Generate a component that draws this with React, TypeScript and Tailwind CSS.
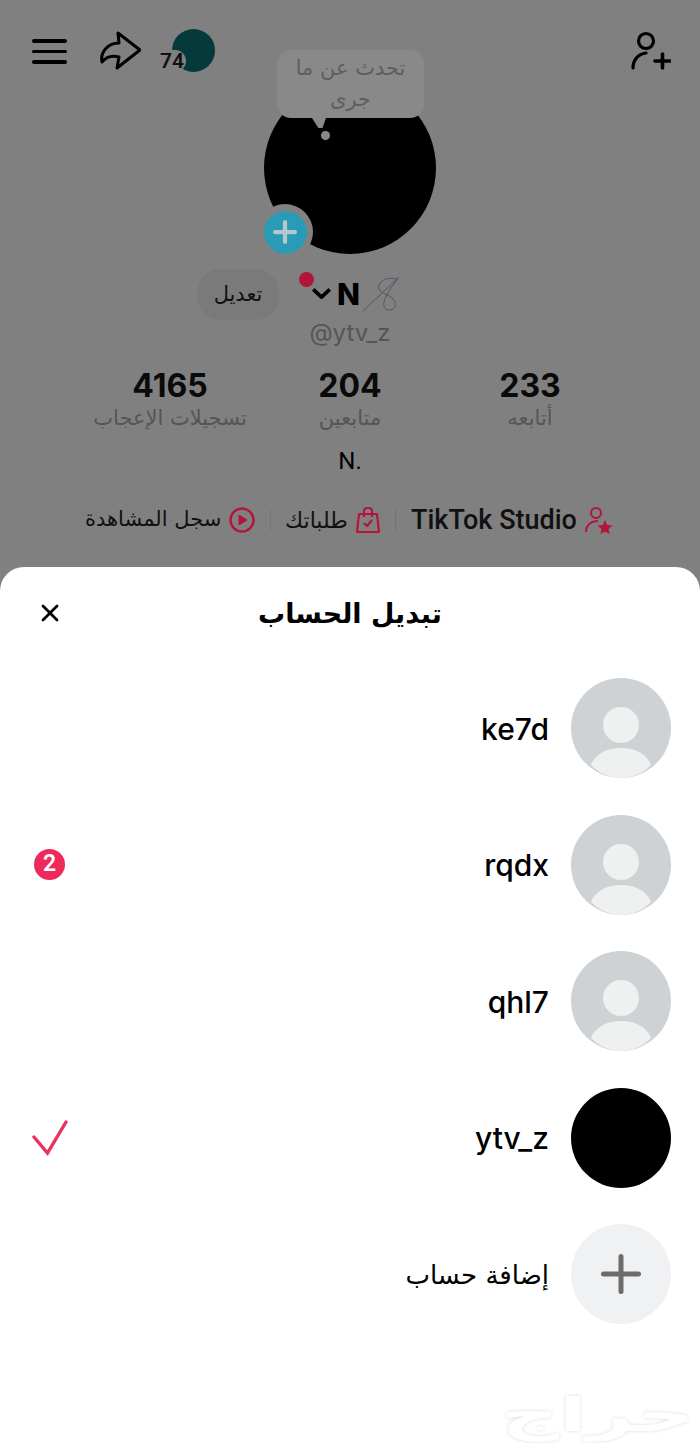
import { Plus, X } from 'lucide-react'

const accounts = [
  { name: 'ke7d' },
  { name: 'rqdx', badge: 2 },
  { name: 'qhl7' },
]

const stats = [
  { value: '4165', label: 'تسجيلات الإعجاب' },
  { value: '204', label: 'متابعين' },
  { value: '233', label: 'أتابعه' },
]

function DefaultAvatar() {
  return (
    <svg viewBox="0 0 100 100" className="h-[100px] w-[100px] shrink-0">
      <circle cx="50" cy="50" r="50" fill="#cfd2d4" />
      <circle cx="50" cy="47" r="18" fill="#eff0f0" />
      <path d="M20 87 C24 76 36 70 50 70 C64 70 76 76 80 87 C72 95 62 100 50 100 C38 100 28 95 20 87 Z" fill="#eff0f0" />
    </svg>
  )
}

function AccountRow({ name, badge, check, black }: { name: string; badge?: number; check?: boolean; black?: boolean }) {
  return (
    <div className="flex h-[100px] items-center justify-between">
      <div className="flex w-[37px] items-center justify-center">
        {badge ? (
          <span className="flex h-[31px] w-[31px] items-center justify-center rounded-full bg-[#ee2a5c] text-[23px] font-semibold text-white [font-family:Roboto,sans-serif]">
            {badge}
          </span>
        ) : null}
        {check ? (
          <svg viewBox="0 0 36 36" className="h-[36px] w-[36px] text-[#e8325f]" fill="none" stroke="currentColor" strokeWidth="3.4" strokeLinecap="round">
            <path d="M2 17 L15.5 33 L34 2" />
          </svg>
        ) : null}
      </div>
      <div className="flex items-center gap-[22px]">
        <span className="pt-[2px] text-[30px] font-medium text-black [font-family:Inter,sans-serif]">{name}</span>
        {black ? <div className="h-[100px] w-[100px] rounded-full bg-black" /> : <DefaultAvatar />}
      </div>
    </div>
  )
}

export default function App() {
  return (
    <div className="relative h-[1443px] w-[700px] overflow-hidden bg-[#808080] [font-family:'DejaVu_Sans',Roboto,sans-serif]">
      <div className="h-[567px]">
        <header className="flex h-[82px] items-start justify-between pl-[32px] pr-[29px] pt-[29px]">
          <div className="flex items-start gap-[32px]">
            <div className="mt-[10px] flex w-[35px] flex-col gap-[7px]">
              <span className="h-[3.5px] rounded-full bg-black" />
              <span className="h-[3.5px] rounded-full bg-black" />
              <span className="h-[3.5px] rounded-full bg-black" />
            </div>
            <svg viewBox="0 0 42 40" className="mt-[1px] h-[40px] w-[42px]" fill="none" stroke="black" strokeWidth="3" strokeLinejoin="round">
              <path d="M19 3 L41 20 L18 38 L20 27 C13 25 7 27 3 32 C1 22 9 13 20 13 Z" />
            </svg>
            <div className="relative -ml-[2px] h-[43px] w-[43px]">
              <div className="ml-[1px] h-[43px] w-[43px] rounded-full bg-[#053a3c]" />
              <span className="absolute -left-[12px] top-[21px] rounded-r-xl bg-[#808080] pl-[1px] pr-[2px] text-[21px] font-semibold leading-[22px] text-[#111] [font-family:Roboto,sans-serif]">74</span>
            </div>
          </div>
          <svg viewBox="0 0 42 40" className="mt-[1px] h-[40px] w-[42px]" fill="none" stroke="black" strokeWidth="3.2" strokeLinecap="round">
            <circle cx="17" cy="11" r="7.5" />
            <path d="M4 38 C4 30 9 24 17 23" />
            <path d="M26 31 H41 M33.5 24 V38" strokeWidth="3.6" />
          </svg>
        </header>

        <div className="relative mx-auto h-[172px] w-[172px]">
          <div className="h-[172px] w-[172px] rounded-full bg-black" />
          <div className="absolute -top-[32px] left-[13px] flex h-[68px] w-[147px] items-center justify-center rounded-[14px] bg-[#898989] px-3 text-center text-[21px] leading-[31px] text-[#5e5e5e]">
            تحدث عن ما جرى
          </div>
          <div className="absolute left-[48px] top-[36px] h-[10px] w-[14px] bg-[#898989] [clip-path:polygon(0_0,100%_0,75%_100%,45%_100%)]" />
          <div className="absolute left-[57px] top-[49px] h-[9px] w-[9px] rounded-full bg-[#898989]" />
          <div className="absolute -left-[7px] top-[122px] flex h-[56px] w-[56px] items-center justify-center rounded-full bg-[#818181]">
            <div className="flex h-[43px] w-[43px] items-center justify-center rounded-full bg-[#2a9bb6]">
              <Plus className="h-[34px] w-[34px] text-[#b5c6cc]" strokeWidth={3} />
            </div>
          </div>
        </div>

        <div className="mt-[15px] flex h-[51px] items-center pl-[197px]">
          <div className="flex h-[51px] w-[82px] items-center justify-center rounded-[24px] bg-[#7a7a7a] text-[21px] text-[#111]">تعديل</div>
          <div className="relative ml-[32px] flex h-[40px] items-center">
            <span className="absolute -left-[12px] -top-[3px] h-[15px] w-[15px] rounded-full bg-[#b3143a]" />
            <svg viewBox="0 0 20 12" className="-mt-[2px] h-[11px] w-[21px]" fill="none" stroke="black" strokeWidth="4">
              <path d="M1 1.5 L10 10 L19 1.5" />
            </svg>
            <span className="-mt-[2px] ml-[5px] text-[30px] font-extrabold leading-none text-black [font-family:Inter,sans-serif]">N</span>
            <svg viewBox="0 0 36 37" className="ml-[3px] h-[37px] w-[36px]" fill="none" stroke="#4e5a66" strokeWidth="1">
              <path d="M0 35 L36 1" />
              <path d="M34 3 C26 1 17 3 15.5 11 C15 17 26 18 30 23 C35 29 31 35 25 34 C18 32 20 24 28 12 L35 2" />
            </svg>
          </div>
        </div>

        <p className="mt-[1px] text-center text-[24px] leading-[24px] text-[#555] [font-family:Inter,sans-serif]">@ytv_z</p>

        <div className="mt-[24px] grid grid-cols-3 px-[80px] text-center">
          {stats.map((stat) => (
            <div key={stat.value}>
              <p className="text-[32px] font-bold leading-[34px] text-[#0a0a0a] [font-family:Inter,sans-serif]">{stat.value}</p>
              <p className="mt-[1px] whitespace-nowrap text-[21px] leading-[28px] text-[#555]">{stat.label}</p>
            </div>
          ))}
        </div>

        <p className="mt-[15px] text-center text-[24px] leading-[28px] text-black [font-family:Roboto,sans-serif]">N.</p>

        <div className="mt-[30px] flex h-[30px] items-center pl-[85px]">
          <span className="w-[135px] whitespace-nowrap text-right text-[21px] text-[#111]">سجل المشاهدة</span>
          <svg viewBox="0 0 26 26" className="ml-[9px] h-[26px] w-[26px]" fill="none" stroke="#b3143a" strokeWidth="2.4">
            <circle cx="13" cy="13" r="11.5" />
            <path d="M10 8 L18 13 L10 18 Z" fill="#b3143a" strokeWidth="1" />
          </svg>
          <span className="ml-[15px] h-[22px] w-px bg-[#757575]" />
          <span className="ml-[14px] w-[61px] whitespace-nowrap text-right text-[22px] text-[#111]">طلباتك</span>
          <svg viewBox="0 0 24 28" className="ml-[10px] h-[28px] w-[24px]" fill="none" stroke="#b3143a" strokeWidth="2.2" strokeLinejoin="round">
            <path d="M3 8 H21 L23 26 H1 Z" />
            <path d="M8 11 V5 C8 1 16 1 16 5 V11" />
            <path d="M8 17 L11 20 L16 14" />
          </svg>
          <span className="ml-[15px] h-[22px] w-px bg-[#757575]" />
          <span className="ml-[15px] whitespace-nowrap text-[27px] font-medium text-[#111] [font-family:Roboto,sans-serif]">TikTok Studio</span>
          <svg viewBox="0 0 28 28" className="ml-[8px] h-[28px] w-[28px]" fill="none" stroke="#b3143a" strokeWidth="2">
            <circle cx="11" cy="7" r="5" />
            <path d="M1 26 C1 19 6 15 13 15" />
            <path d="M20 14 L22.2 19 L27.5 19.5 L23.5 23 L24.7 28 L20 25.4 L15.3 28 L16.5 23 L12.5 19.5 L17.8 19 Z" fill="#b3143a" stroke="none" />
          </svg>
        </div>
      </div>

      <section className="h-[876px] rounded-t-[24px] bg-white">
        <div className="relative flex h-[94px] items-center justify-center">
          <X className="absolute left-[36px] top-[32px] h-[28px] w-[28px] text-black" strokeWidth={2.4} />
          <h1 className="text-[27px] font-bold text-black">تبديل الحساب</h1>
        </div>
        <div className="mt-[17px] flex flex-col gap-[36.5px] pl-[31px] pr-[29px]">
          {accounts.map((account) => (
            <AccountRow key={account.name} name={account.name} badge={account.badge} />
          ))}
          <AccountRow name="ytv_z" check black />
          <div className="flex h-[100px] items-center justify-end gap-[22px]">
            <span className="pt-[3px] text-[26px] text-black">إضافة حساب</span>
            <div className="flex h-[100px] w-[100px] items-center justify-center rounded-full bg-[#f0f1f3]">
              <Plus className="h-[60px] w-[60px] text-[#6c6c6c]" strokeWidth={2} />
            </div>
          </div>
        </div>
      </section>

      <span className="absolute -bottom-[2px] right-[5px] origin-right scale-x-[1.75] text-[46px] font-bold leading-[60px] text-white [text-shadow:0_0_3px_#d5dbe0]">حراج</span>
    </div>
  )
}
